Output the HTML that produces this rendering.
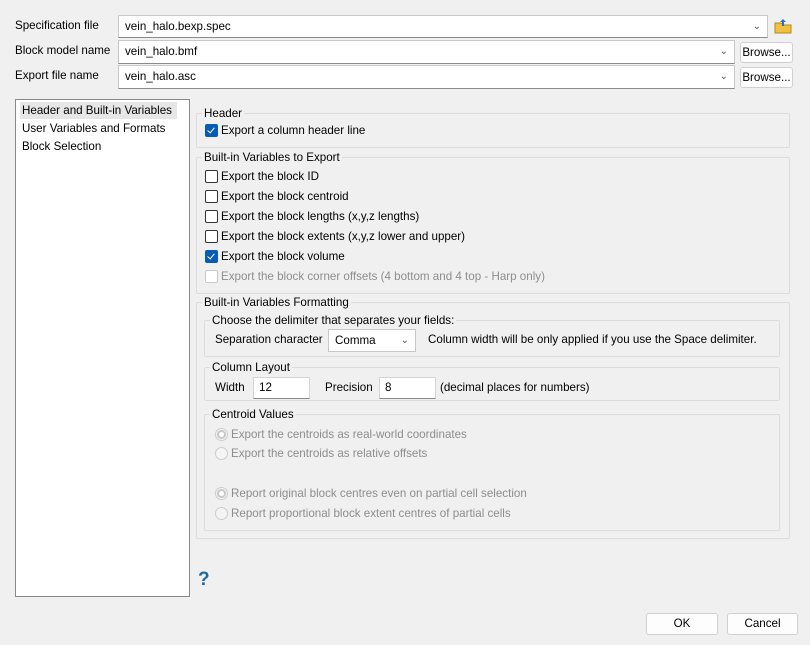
<!DOCTYPE html>
<html><head><style>
*{box-sizing:border-box;margin:0;padding:0}
body{width:810px;height:645px;background:#f0f0f0;font-family:"Liberation Sans",sans-serif;font-size:11.6px;color:#000;position:relative;overflow:hidden}
.a{position:absolute;white-space:nowrap}
.combo{position:absolute;background:#fff;border:1px solid #c8c8c8;border-bottom:1px solid #8a8a8a;padding:0 6px;line-height:21px}
.combo .ar{position:absolute;right:6px;top:0;color:#555;font-size:10px}
.btn{position:absolute;background:#fdfdfd;border:1px solid #d0d0d0;border-radius:3px;text-align:center;line-height:19px}
.grp{position:absolute;border:1px solid #dcdcdc;border-radius:2px}
.gt{position:absolute;background:#f0f0f0;padding:0 2px;line-height:13px;top:-7px;left:5px}
.cb{position:absolute;width:13px;height:13px;border:1px solid #333;border-radius:2px;background:#fff}
.cb.on{background:#0a5bb5;border-color:#0a5bb5}
.cb.on:after{content:"";position:absolute;left:3px;top:1px;width:3px;height:6px;border:solid #fff;border-width:0 1px 1px 0;transform:rotate(40deg)}
.cb.dis{border-color:#c8c8c8}
.rb{position:absolute;width:13px;height:13px;border:1px solid #ccc;border-radius:50%;background:#f4f4f4}
.rb.on:after{content:"";position:absolute;left:3px;top:3px;width:5px;height:5px;border-radius:50%;background:#fff;box-shadow:0 0 0 2px #c8c8c8}
.dis{color:#8d8d8d}
.inp{position:absolute;background:#fff;border:1px solid #d5d5d5;border-bottom:1px solid #8a8a8a;padding-left:5px;line-height:20px}
</style></head><body>
<div class="a" style="left:15px;top:19px">Specification file</div>
<div class="combo" style="left:118px;top:15px;width:650px;height:23px">vein_halo.bexp.spec<span class="ar">&#8964;</span></div>
<svg class="a" style="left:774px;top:18px" width="18" height="16"><path d="M1 5h6l2 2h8v8H1z" fill="#f0c040" stroke="#b08a20"/><path d="M9 1l-3 3h2v4h2V4h2z" fill="#2a6fd0"/></svg>
<div class="a" style="left:15px;top:44px">Block model name</div>
<div class="combo" style="left:118px;top:40px;width:617px;height:24px">vein_halo.bmf<span class="ar">&#8964;</span></div>
<div class="btn" style="left:740px;top:42px;width:53px;height:21px">Browse...</div>
<div class="a" style="left:15px;top:69px">Export file name</div>
<div class="combo" style="left:118px;top:65px;width:617px;height:24px">vein_halo.asc<span class="ar">&#8964;</span></div>
<div class="btn" style="left:740px;top:67px;width:53px;height:21px">Browse...</div>

<div class="a" style="left:15px;top:99px;width:175px;height:498px;background:#fff;border:1px solid #888"></div>
<div class="a" style="left:20px;top:102px;width:157px;height:17px;background:#e6e6e6"></div>
<div class="a" style="left:22px;top:104px">Header and Built-in Variables</div>
<div class="a" style="left:22px;top:122px">User Variables and Formats</div>
<div class="a" style="left:22px;top:140px">Block Selection</div>

<div class="grp" style="left:196px;top:113px;width:594px;height:35px"><div class="gt" style="left:5px">Header</div></div>
<div class="cb on" style="left:205px;top:124px"></div><div class="a" style="left:221px;top:124px">Export a column header line</div>

<div class="grp" style="left:196px;top:157px;width:594px;height:137px"><div class="gt">Built-in Variables to Export</div></div>
<div class="cb" style="left:205px;top:170px"></div><div class="a" style="left:221px;top:170px">Export the block ID</div>
<div class="cb" style="left:205px;top:190px"></div><div class="a" style="left:221px;top:190px">Export the block centroid</div>
<div class="cb" style="left:205px;top:210px"></div><div class="a" style="left:221px;top:210px">Export the block lengths (x,y,z lengths)</div>
<div class="cb" style="left:205px;top:230px"></div><div class="a" style="left:221px;top:230px">Export the block extents (x,y,z lower and upper)</div>
<div class="cb on" style="left:205px;top:250px"></div><div class="a" style="left:221px;top:250px">Export the block volume</div>
<div class="cb dis" style="left:205px;top:270px"></div><div class="a dis" style="left:221px;top:270px">Export the block corner offsets (4 bottom and 4 top - Harp only)</div>

<div class="grp" style="left:196px;top:302px;width:594px;height:237px"><div class="gt">Built-in Variables Formatting</div></div>
<div class="grp" style="left:204px;top:320px;width:576px;height:37px"><div class="gt">Choose the delimiter that separates your fields:</div></div>
<div class="a" style="left:215px;top:333px">Separation character</div>
<div class="combo" style="left:328px;top:329px;width:88px;height:23px;line-height:22px;border-color:#c8c8c8">Comma<span class="ar">&#8964;</span></div>
<div class="a" style="left:428px;top:333px">Column width will be only applied if you use the Space delimiter.</div>

<div class="grp" style="left:204px;top:367px;width:576px;height:34px"><div class="gt">Column Layout</div></div>
<div class="a" style="left:215px;top:381px">Width</div>
<div class="inp" style="left:253px;top:377px;width:57px;height:22px">12</div>
<div class="a" style="left:325px;top:381px">Precision</div>
<div class="inp" style="left:379px;top:377px;width:57px;height:22px">8</div>
<div class="a" style="left:440px;top:381px">(decimal places for numbers)</div>

<div class="grp" style="left:204px;top:414px;width:576px;height:117px"><div class="gt">Centroid Values</div></div>
<div class="rb on" style="left:215px;top:428px"></div><div class="a dis" style="left:231px;top:428px">Export the centroids as real-world coordinates</div>
<div class="rb" style="left:215px;top:447px"></div><div class="a dis" style="left:231px;top:447px">Export the centroids as relative offsets</div>
<div class="rb on" style="left:215px;top:487px"></div><div class="a dis" style="left:231px;top:487px">Report original block centres even on partial cell selection</div>
<div class="rb" style="left:215px;top:507px"></div><div class="a dis" style="left:231px;top:507px">Report proportional block extent centres of partial cells</div>

<div class="a" style="left:198px;top:569px;font-size:19px;font-weight:bold;color:#1a6aa8">?</div>
<div class="btn" style="left:646px;top:613px;width:72px;height:22px;line-height:20px">OK</div>
<div class="btn" style="left:727px;top:613px;width:71px;height:22px;line-height:20px">Cancel</div>
</body></html>
